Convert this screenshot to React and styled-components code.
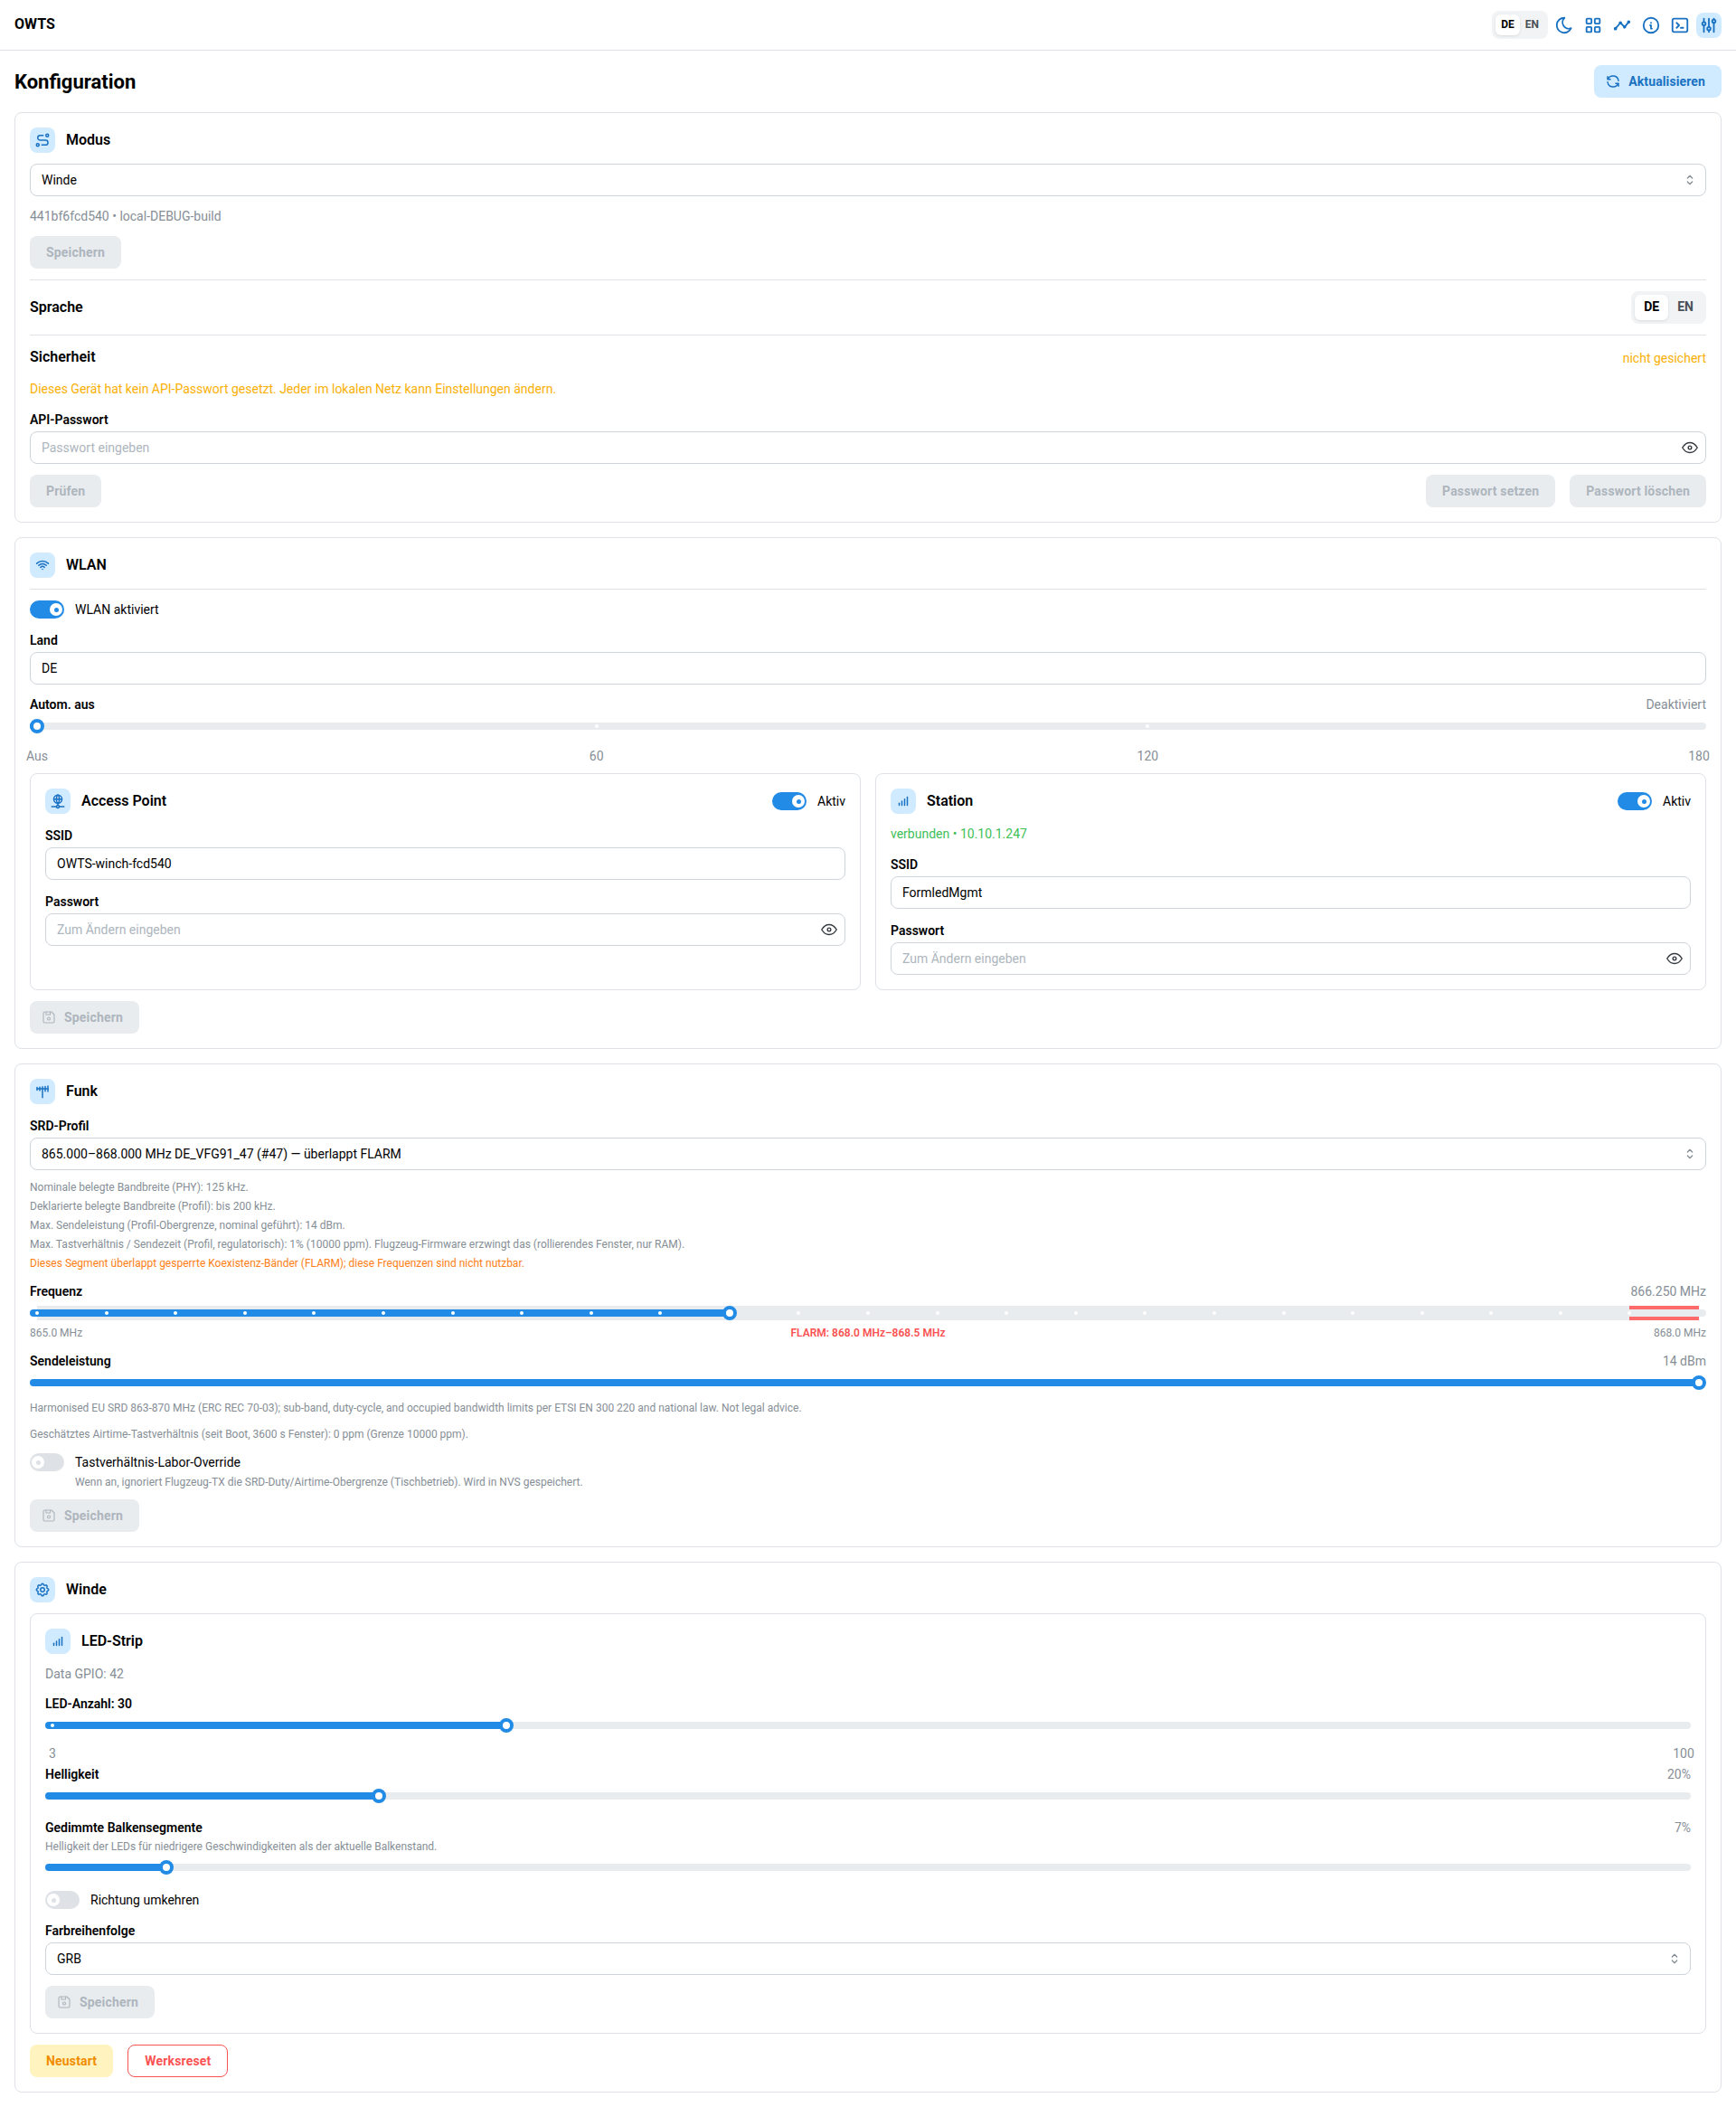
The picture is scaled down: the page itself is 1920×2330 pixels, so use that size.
import React from "react";
import styled, { createGlobalStyle } from "styled-components";
import {
  TbAdjustments,
  TbAntenna,
  TbAntennaBars5,
  TbDeviceFloppy,
  TbEye,
  TbInfoCircle,
  TbLayoutGrid,
  TbMoon,
  TbNetwork,
  TbRefresh,
  TbRoute,
  TbSelector,
  TbSettings,
  TbTerminal2,
  TbTimeline,
  TbWifi,
} from "react-icons/tb";

const BLUE = "#228be6";
const ICON_BLUE = "#1971c2";

const freqMarks = Array.from({ length: 24 }, (_, i) => (i / 24) * 100);

export default function App() {
  return (
    <>
      <GlobalStyle />
      <Header>
        <Brand>OWTS</Brand>
        <HeaderTools>
          <Segmented $small>
            <SegmentItem $small $active>DE</SegmentItem>
            <SegmentItem $small>EN</SegmentItem>
          </Segmented>
          <NavIcon><TbMoon size={22} /></NavIcon>
          <NavIcon><TbLayoutGrid size={22} /></NavIcon>
          <NavIcon><TbTimeline size={22} /></NavIcon>
          <NavIcon><TbInfoCircle size={22} /></NavIcon>
          <NavIcon><TbTerminal2 size={22} /></NavIcon>
          <NavIcon $active><TbAdjustments size={22} /></NavIcon>
        </HeaderTools>
      </Header>

      <Main>
        <TitleRow>
          <PageTitle>Konfiguration</PageTitle>
          <RefreshButton><TbRefresh size={18} />Aktualisieren</RefreshButton>
        </TitleRow>

        <Card>
          <CardHead icon={<TbRoute size={18} />} title="Modus" />
          <SelectField value="Winde" />
          <Meta>441bf6fcd540 • local-DEBUG-build</Meta>
          <DisabledButton>Speichern</DisabledButton>
          <Divider />
          <SpreadRow>
            <SectionTitle>Sprache</SectionTitle>
            <Segmented>
              <SegmentItem $active>DE</SegmentItem>
              <SegmentItem>EN</SegmentItem>
            </Segmented>
          </SpreadRow>
          <Divider />
          <SpreadRow>
            <SectionTitle>Sicherheit</SectionTitle>
            <Meta $color="#fab005">nicht gesichert</Meta>
          </SpreadRow>
          <Meta $color="#fab005">
            Dieses Gerät hat kein API-Passwort gesetzt. Jeder im lokalen Netz kann Einstellungen ändern.
          </Meta>
          <Field>
            <FieldLabel>API-Passwort</FieldLabel>
            <PasswordInput placeholder="Passwort eingeben" />
          </Field>
          <SpreadRow>
            <DisabledButton>Prüfen</DisabledButton>
            <ButtonGroup>
              <DisabledButton>Passwort setzen</DisabledButton>
              <DisabledButton>Passwort löschen</DisabledButton>
            </ButtonGroup>
          </SpreadRow>
        </Card>

        <Card>
          <CardHead icon={<TbWifi size={18} />} title="WLAN" />
          <Divider />
          <Toggle on label="WLAN aktiviert" />
          <Field>
            <FieldLabel>Land</FieldLabel>
            <TextInput readOnly value="DE" />
          </Field>
          <SliderBlock>
            <SliderHead>
              <FieldLabel>Autom. aus</FieldLabel>
              <Dimmed>Deaktiviert</Dimmed>
            </SliderHead>
            <Slider value={0} marks={[33.66, 66.83]} />
            <MarkLabels>
              <MarkLabel style={{ left: "0%" }}>Aus</MarkLabel>
              <MarkLabel style={{ left: "33.66%" }}>60</MarkLabel>
              <MarkLabel style={{ left: "66.83%" }}>120</MarkLabel>
              <MarkLabel style={{ left: "100%" }}>180</MarkLabel>
            </MarkLabels>
          </SliderBlock>
          <TwoColumns>
            <InnerCard>
              <InnerHead icon={<TbNetwork size={18} />} title="Access Point" />
              <Field>
                <FieldLabel>SSID</FieldLabel>
                <TextInput readOnly value="OWTS-winch-fcd540" />
              </Field>
              <Field>
                <FieldLabel>Passwort</FieldLabel>
                <PasswordInput placeholder="Zum Ändern eingeben" />
              </Field>
            </InnerCard>
            <InnerCard>
              <InnerHead icon={<TbAntennaBars5 size={18} />} title="Station" />
              <Meta $color="#40c057">verbunden • 10.10.1.247</Meta>
              <Field>
                <FieldLabel>SSID</FieldLabel>
                <TextInput readOnly value="FormledMgmt" />
              </Field>
              <Field>
                <FieldLabel>Passwort</FieldLabel>
                <PasswordInput placeholder="Zum Ändern eingeben" />
              </Field>
            </InnerCard>
          </TwoColumns>
          <SaveButton />
        </Card>

        <Card>
          <CardHead icon={<TbAntenna size={18} />} title="Funk" />
          <Field>
            <FieldLabel>SRD-Profil</FieldLabel>
            <SelectField value="865.000–868.000 MHz DE_VFG91_47 (#47) — überlappt FLARM" />
          </Field>
          <ProfileNotes>
            <div>Nominale belegte Bandbreite (PHY): 125 kHz.</div>
            <div>Deklarierte belegte Bandbreite (Profil): bis 200 kHz.</div>
            <div>Max. Sendeleistung (Profil-Obergrenze, nominal geführt): 14 dBm.</div>
            <div>
              Max. Tastverhältnis / Sendezeit (Profil, regulatorisch): 1% (10000 ppm). Flugzeug-Firmware erzwingt das
              (rollierendes Fenster, nur RAM).
            </div>
            <NoteWarning>
              Dieses Segment überlappt gesperrte Koexistenz-Bänder (FLARM); diese Frequenzen sind nicht nutzbar.
            </NoteWarning>
          </ProfileNotes>
          <SliderBlock>
            <SliderHead>
              <FieldLabel>Frequenz</FieldLabel>
              <Dimmed>866.250 MHz</Dimmed>
            </SliderHead>
            <Slider value={41.667} marks={freqMarks} band />
            <RangeLabels>
              <span>865.0 MHz</span>
              <FlarmLabel>FLARM: 868.0 MHz–868.5 MHz</FlarmLabel>
              <span>868.0 MHz</span>
            </RangeLabels>
          </SliderBlock>
          <SliderBlock>
            <SliderHead>
              <FieldLabel>Sendeleistung</FieldLabel>
              <Dimmed>14 dBm</Dimmed>
            </SliderHead>
            <Slider value={100} />
          </SliderBlock>
          <HintGroup>
            <Hint>
              Harmonised EU SRD 863-870 MHz (ERC REC 70-03); sub-band, duty-cycle, and occupied bandwidth limits per
              ETSI EN 300 220 and national law. Not legal advice.
            </Hint>
            <Hint>Geschätztes Airtime-Tastverhältnis (seit Boot, 3600 s Fenster): 0 ppm (Grenze 10000 ppm).</Hint>
          </HintGroup>
          <Toggle
            label="Tastverhältnis-Labor-Override"
            description="Wenn an, ignoriert Flugzeug-TX die SRD-Duty/Airtime-Obergrenze (Tischbetrieb). Wird in NVS gespeichert."
          />
          <SaveButton />
        </Card>

        <Card>
          <CardHead icon={<TbSettings size={18} />} title="Winde" />
          <InnerCard>
            <InnerHead icon={<TbAntennaBars5 size={18} />} title="LED-Strip" />
            <Meta>Data GPIO: 42</Meta>
            <SliderBlock $mt={1}>
              <SliderHead>
                <FieldLabel>LED-Anzahl: 30</FieldLabel>
              </SliderHead>
              <Slider value={27.835} marks={[0]} />
              <MarkLabels $top={12} $height={20}>
                <MarkLabel style={{ left: "0%" }}>3</MarkLabel>
                <MarkLabel style={{ left: "100%" }}>100</MarkLabel>
              </MarkLabels>
            </SliderBlock>
            <SliderBlock $mt={-8}>
              <SliderHead>
                <FieldLabel>Helligkeit</FieldLabel>
                <Dimmed>20%</Dimmed>
              </SliderHead>
              <Slider value={20} />
            </SliderBlock>
            <SliderBlock $mt={5}>
              <SliderHead>
                <FieldLabel>Gedimmte Balkensegmente</FieldLabel>
                <Dimmed>7%</Dimmed>
              </SliderHead>
              <SliderNote>Helligkeit der LEDs für niedrigere Geschwindigkeiten als der aktuelle Balkenstand.</SliderNote>
              <Slider value={7} />
            </SliderBlock>
            <Toggle label="Richtung umkehren" $mt={6} />
            <Field>
              <FieldLabel>Farbreihenfolge</FieldLabel>
              <SelectField value="GRB" />
            </Field>
            <SaveButton />
          </InnerCard>
          <ButtonGroup>
            <RestartButton>Neustart</RestartButton>
            <ResetButton>Werksreset</ResetButton>
          </ButtonGroup>
        </Card>
      </Main>
    </>
  );
}

function CardHead({ icon, title }) {
  return (
    <HeadRow>
      <IconBox>{icon}</IconBox>
      <SectionTitle>{title}</SectionTitle>
    </HeadRow>
  );
}

// Kopf der inneren Karten, immer mit "Aktiv"-Schalter ausser bei LED-Strip
function InnerHead({ icon, title }) {
  return (
    <SpreadRow>
      <CardHead icon={icon} title={title} />
      {title !== "LED-Strip" && <Toggle on label="Aktiv" />}
    </SpreadRow>
  );
}

function SelectField({ value }) {
  return (
    <InputWrap>
      <NativeSelect defaultValue={value}>
        <option>{value}</option>
      </NativeSelect>
      <InputIcon><TbSelector size={16} color="#868e96" /></InputIcon>
    </InputWrap>
  );
}

function PasswordInput({ placeholder }) {
  return (
    <InputWrap>
      <TextInput type="password" placeholder={placeholder} />
      <InputIcon><TbEye size={22} strokeWidth={1.5} color="#343a40" /></InputIcon>
    </InputWrap>
  );
}

function SaveButton() {
  return (
    <DisabledButton $withIcon>
      <TbDeviceFloppy size={18} strokeWidth={1.5} />
      Speichern
    </DisabledButton>
  );
}

function Toggle({ on, label, description, $mt }) {
  return (
    <ToggleRow $mt={$mt}>
      <ToggleTrack $on={on}>
        <ToggleThumb $on={on} />
      </ToggleTrack>
      <ToggleText>
        <span>{label}</span>
        {description && <ToggleDescription>{description}</ToggleDescription>}
      </ToggleText>
    </ToggleRow>
  );
}

function Slider({ value, marks = [], band }) {
  const pos = (p) => `calc(8px + (100% - 16px) * ${p / 100})`;
  return (
    <Rail>
      {band && <FreqBand />}
      {band && <BlockedBand style={{ left: pos(95.833) }} />}
      <Track />
      <Fill style={{ width: pos(value) }} />
      {marks.map((m) => (
        <MarkDot key={m} style={{ left: pos(m) }} />
      ))}
      <Thumb style={{ left: pos(value) }} />
    </Rail>
  );
}

const GlobalStyle = createGlobalStyle`
  body {
    margin: 0;
    background: #fff;
    color: #000;
    font-family: Roboto, "Liberation Sans", sans-serif;
    font-size: 14px;
    line-height: 1.55;
  }

  * {
    box-sizing: border-box;
  }
`;

const Header = styled.header`
  height: 56px;
  padding: 0 16px;
  display: flex;
  align-items: center;
  justify-content: space-between;
  border-bottom: 1px solid #dee2e6;
`;

const Brand = styled.div`
  font-size: 16px;
  font-weight: 700;
`;

const HeaderTools = styled.div`
  display: flex;
  align-items: center;
  gap: 4px;
`;

const NavIcon = styled.div`
  width: 28px;
  height: 28px;
  display: flex;
  align-items: center;
  justify-content: center;
  border-radius: 8px;
  color: ${ICON_BLUE};
  background: ${(p) => (p.$active ? "#d0ebff" : "transparent")};
`;

const Segmented = styled.div`
  display: inline-flex;
  padding: 4px;
  height: ${(p) => (p.$small ? "31px" : "36px")};
  background: #f1f3f5;
  border-radius: 8px;
`;

const SegmentItem = styled.div`
  display: flex;
  align-items: center;
  padding: 0 ${(p) => (p.$small ? "6px" : "10px")};
  font-size: ${(p) => (p.$small ? "12px" : "14px")};
  font-weight: 700;
  border-radius: 6px;
  color: ${(p) => (p.$active ? "#000" : "#495057")};
  background: ${(p) => (p.$active ? "#fff" : "transparent")};
  box-shadow: ${(p) => (p.$active ? "0 1px 3px rgba(0, 0, 0, 0.1)" : "none")};
`;

const Main = styled.main`
  padding: 16px;
  display: flex;
  flex-direction: column;
  gap: 16px;
`;

const TitleRow = styled.div`
  display: flex;
  align-items: center;
  justify-content: space-between;
`;

const PageTitle = styled.h1`
  margin: 0;
  padding-top: 1px;
  font-size: 22px;
  font-weight: 700;
  line-height: 35px;
`;

const RefreshButton = styled.button`
  height: 36px;
  padding: 0 18px 0 12px;
  display: flex;
  align-items: center;
  gap: 8px;
  border: 0;
  border-radius: 8px;
  background: #d0ebff;
  color: ${ICON_BLUE};
  font: 700 14px Roboto, sans-serif;
  letter-spacing: 0.12px;
`;

const Card = styled.section`
  padding: 16px;
  display: flex;
  flex-direction: column;
  gap: 12px;
  border: 1px solid #dee2e6;
  border-radius: 8px;
`;

const InnerCard = styled(Card)``;

const TwoColumns = styled.div`
  display: grid;
  grid-template-columns: 1fr 1fr;
  gap: 16px;
`;

const HeadRow = styled.div`
  display: flex;
  align-items: center;
  gap: 12px;
`;

const IconBox = styled.div`
  width: 28px;
  height: 28px;
  display: flex;
  align-items: center;
  justify-content: center;
  border-radius: 8px;
  background: #d0ebff;
  color: ${ICON_BLUE};
`;

const SectionTitle = styled.div`
  padding-bottom: 2px;
  font-size: 16px;
  font-weight: 600;
  line-height: 23px;
`;

const SpreadRow = styled.div`
  display: flex;
  align-items: center;
  justify-content: space-between;
`;

const ButtonGroup = styled.div`
  display: flex;
  gap: 16px;
`;

const Divider = styled.hr`
  width: 100%;
  margin: 0;
  border: 0;
  border-top: 1px solid #dee2e6;
`;

const Meta = styled.div`
  line-height: 20px;
  color: ${(p) => p.$color || "#868e96"};
`;

const Dimmed = styled.span`
  color: #868e96;
`;

const DisabledButton = styled.button`
  align-self: flex-start;
  height: 36px;
  padding: ${(p) => (p.$withIcon ? "0 18px 0 12px" : "0 18px")};
  display: flex;
  align-items: center;
  gap: 8px;
  border: 0;
  border-radius: 8px;
  background: #e9ecef;
  color: #adb5bd;
  font: 700 14px Roboto, sans-serif;
  letter-spacing: 0.17px;
`;

const RestartButton = styled(DisabledButton)`
  background: #fff3bf;
  color: #f08c00;
`;

const ResetButton = styled(DisabledButton)`
  background: #fff;
  color: #fa5252;
  border: 1px solid #fa5252;
`;

const Field = styled.div`
  display: flex;
  flex-direction: column;
`;

const FieldLabel = styled.label`
  display: block;
  font-weight: 600;
  line-height: 24px;
  margin-bottom: 1px;
`;

const InputWrap = styled.div`
  position: relative;
`;

const TextInput = styled.input`
  display: block;
  width: 100%;
  height: 36px;
  padding: 0 12px;
  border: 1px solid #ced4da;
  border-radius: 8px;
  background: #fff;
  color: #000;
  font: 14px Roboto, sans-serif;
  outline: none;

  &::placeholder {
    color: #adb5bd;
  }
`;

const NativeSelect = styled.select`
  display: block;
  width: 100%;
  height: 36px;
  padding: 0 12px;
  border: 1px solid #ced4da;
  border-radius: 8px;
  background: #fff;
  color: #000;
  font: 14px Roboto, sans-serif;
  appearance: none;
  outline: none;
`;

const InputIcon = styled.span`
  position: absolute;
  top: 0;
  right: 0;
  width: 36px;
  height: 36px;
  display: flex;
  align-items: center;
  justify-content: center;
  pointer-events: none;
`;

const ToggleRow = styled.div`
  display: flex;
  align-items: flex-start;
  gap: 12px;
  margin-top: ${(p) => p.$mt || 0}px;
`;

const ToggleTrack = styled.div`
  position: relative;
  flex: none;
  width: 38px;
  height: 20px;
  border-radius: 999px;
  background: ${(p) => (p.$on ? BLUE : "#dee2e6")};
`;

const ToggleThumb = styled.div`
  position: absolute;
  top: 3px;
  left: ${(p) => (p.$on ? "22px" : "2px")};
  width: 14px;
  height: 14px;
  border-radius: 50%;
  background: #fff;

  &::after {
    content: "";
    position: absolute;
    top: 4.5px;
    left: 4.5px;
    width: 5px;
    height: 5px;
    border-radius: 50%;
    background: ${(p) => (p.$on ? BLUE : "#dee2e6")};
  }
`;

const ToggleText = styled.div`
  display: flex;
  flex-direction: column;
  line-height: 20px;
`;

const ToggleDescription = styled.span`
  margin: 3px 0 -2px;
  font-size: 12px;
  line-height: 18px;
  color: #868e96;
`;

const SliderBlock = styled.div`
  display: flex;
  flex-direction: column;
  margin-top: ${(p) => p.$mt || 0}px;
`;

const SliderHead = styled.div`
  display: flex;
  justify-content: space-between;
  line-height: 21.7px;
  margin-bottom: 4.3px;

  label {
    margin: 0;
    line-height: 21.7px;
  }
`;

const SliderNote = styled.div`
  margin: -4px 0 6px;
  font-size: 12px;
  line-height: 18px;
  color: #868e96;
`;

const Rail = styled.div`
  position: relative;
  height: 16px;
`;

const Track = styled.div`
  position: absolute;
  top: 4px;
  left: 0;
  right: 0;
  height: 8px;
  border-radius: 999px;
  background: #e9ecef;
`;

const Fill = styled.div`
  position: absolute;
  top: 4px;
  left: 0;
  height: 8px;
  border-radius: 999px 0 0 999px;
  background: ${BLUE};
`;

const FreqBand = styled.div`
  position: absolute;
  top: 0;
  bottom: 0;
  left: 8px;
  right: 8px;
  background: #e9ecef;
`;

const BlockedBand = styled.div`
  position: absolute;
  top: 0;
  bottom: 0;
  right: 8px;
  border-top: 4px solid #ff6b6b;
  border-bottom: 4px solid #ff6b6b;
  z-index: 1;
`;

const MarkDot = styled.div`
  position: absolute;
  top: 6px;
  width: 4px;
  height: 4px;
  margin-left: -2px;
  border-radius: 50%;
  background: #fff;
`;

const Thumb = styled.div`
  position: absolute;
  top: 0;
  width: 16px;
  height: 16px;
  margin-left: -8px;
  border: 4px solid ${BLUE};
  border-radius: 50%;
  background: #fff;
  z-index: 2;
`;

const MarkLabels = styled.div`
  position: relative;
  margin: ${(p) => p.$top ?? 14}px 8px 0;
  height: ${(p) => p.$height ?? 18}px;
`;

const MarkLabel = styled.span`
  position: absolute;
  top: 0;
  transform: translateX(-50%);
  line-height: 22px;
  color: #868e96;
`;

const RangeLabels = styled.div`
  display: grid;
  grid-template-columns: 1fr auto 1fr;
  margin-top: 5px;
  font-size: 12px;
  line-height: 18px;
  color: #868e96;

  span:last-child {
    text-align: right;
  }
`;

const FlarmLabel = styled.span`
  color: #fa5252;
  font-weight: 600;
`;

const ProfileNotes = styled.div`
  margin: -3px 0 -2px;
  font-size: 12px;
  line-height: 21px;
  color: #868e96;
`;

const NoteWarning = styled.div`
  color: #fd7e14;
`;

const HintGroup = styled.div`
  display: flex;
  flex-direction: column;
  gap: 11px;
  margin-top: -1px;
`;

const Hint = styled.div`
  font-size: 12px;
  line-height: 18px;
  color: #868e96;
`;
